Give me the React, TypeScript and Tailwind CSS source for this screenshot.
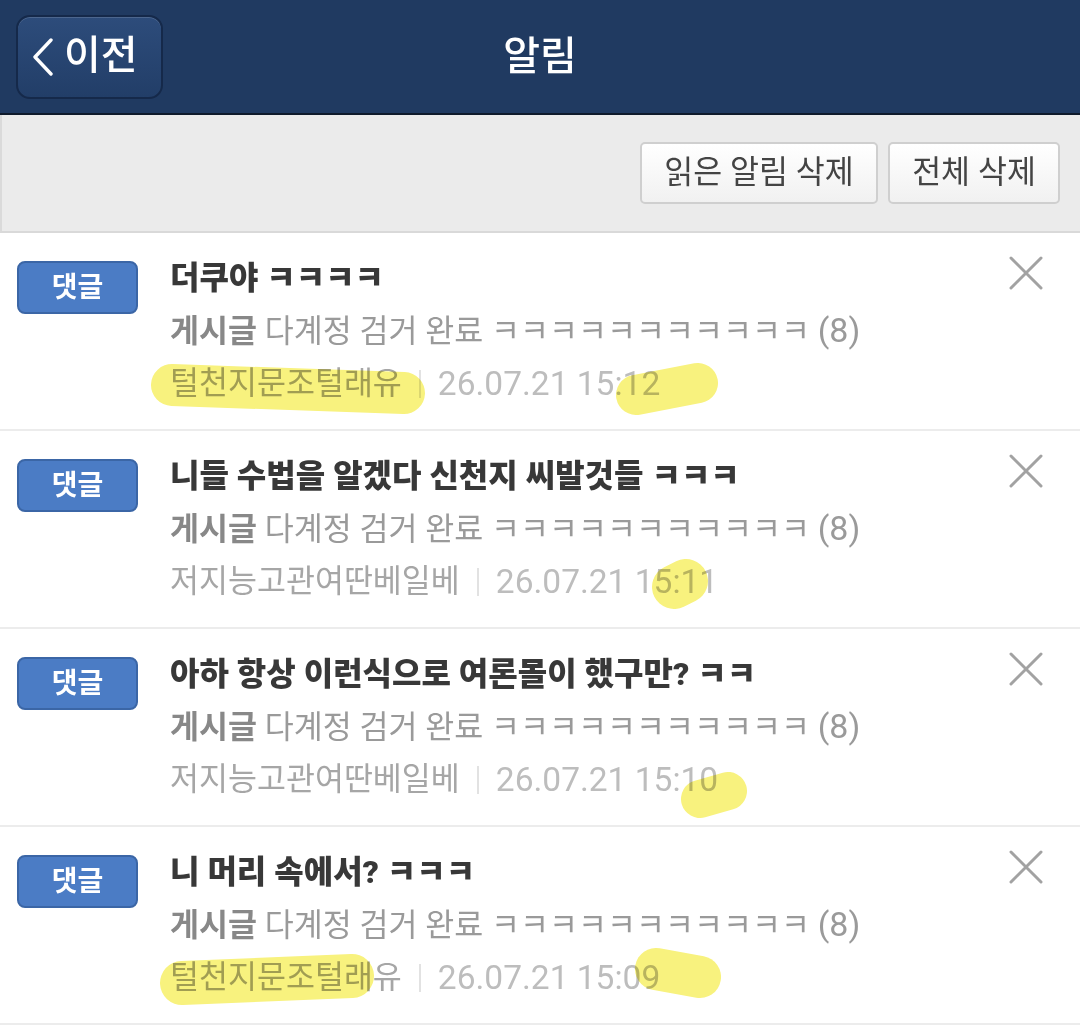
import React from "react"

type Notice = {
  title: string
  author: string
  date: string
  marks: { d: string; w: number }[]
}

const POST = "다계정 검거 완료 ㅋㅋㅋㅋㅋㅋㅋㅋㅋㅋㅋ"

const notices: Notice[] = [
  {
    title: "더쿠야 ㅋㅋㅋㅋ",
    author: "털천지문조털래유",
    date: "26.07.21 15:12",
    marks: [
      { d: "M172 152 L404 160", w: 42 },
      { d: "M636 162 L698 150", w: 40 },
    ],
  },
  {
    title: "니들 수법을 알겠다 신천지 씨발것들 ㅋㅋㅋ",
    author: "저지능고관여딴베일베",
    date: "26.07.21 15:11",
    marks: [{ d: "M674 156 L686 150", w: 44 }],
  },
  {
    title: "아하 항상 이런식으로 여론몰이 했구만? ㅋㅋ",
    author: "저지능고관여딴베일베",
    date: "26.07.21 15:10",
    marks: [{ d: "M700 170 L728 162", w: 38 }],
  },
  {
    title: "니 머리 속에서? ㅋㅋㅋ",
    author: "털천지문조털래유",
    date: "26.07.21 15:09",
    marks: [
      { d: "M182 156 L352 149", w: 44 },
      { d: "M656 142 L700 150", w: 42 },
    ],
  },
]

function CloseIcon() {
  return (
    <svg width="34" height="34" viewBox="0 0 34 34" fill="none">
      <path d="M2 2 L32 32 M32 2 L2 32" stroke="#a2a2a2" strokeWidth="3" strokeLinecap="round" />
    </svg>
  )
}

function NoticeRow({ n }: { n: Notice }) {
  return (
    <li className="relative flex border-b-2 border-[#ececec] h-[198px]">
      <div className="w-[170px] shrink-0 pl-[17px] pt-[28px]">
        <span className="flex items-center justify-center w-[121px] h-[53px] rounded-[8px] bg-[#4b7cc5] border-2 border-[#3b66a6] text-white text-[28px] font-bold">
          댓글
        </span>
      </div>
      <div className="flex-1 pt-[19px] text-[31.5px] leading-[52px]">
        <p className="font-black text-[#383838] text-[32px]">{n.title}</p>
        <p className="text-[#9a9a9a]">
          <span className="font-bold text-[#888]">게시글</span> {POST}{" "}
          <span className="text-[34px]">(8)</span>
        </p>
        <p className="flex items-center">
          <span className="text-[#a6a6a6]">{n.author}</span>
          <span className="mx-[17px] h-[28px] w-[2px] bg-[#e2e2e2]" />
          <span className="text-[#bdbdbd] text-[33.5px]">{n.date}</span>
        </p>
      </div>
      <div className="shrink-0 pt-[23px] pr-[37px]">
        <CloseIcon />
      </div>
      {/* marker scribbles over the row */}
      <svg className="absolute inset-0 pointer-events-none mix-blend-multiply" width="1080" height="198">
        {n.marks.map((m, i) => (
          <path key={i} d={m.d} stroke="#f8f27e" strokeWidth={m.w} strokeLinecap="round" fill="none" />
        ))}
      </svg>
    </li>
  )
}

export default function App() {
  return (
    <div className="w-[1080px] min-h-[1036px] bg-white font-['Roboto','Noto_Sans_CJK_KR',sans-serif]">
      <header className="grid grid-cols-[1fr_auto_1fr] items-center h-[115px] bg-[#203a61] border-b-2 border-[#0f1a2b]">
        <div className="pl-4">
          <button className="flex items-center gap-[10px] w-[147px] h-[84px] pl-[14px] rounded-[14px] border-2 border-[#15294a] bg-gradient-to-b from-[#2d4c7b] to-[#223e68] shadow-[inset_0_1px_0_rgba(255,255,255,0.15)] text-white">
            <svg width="22" height="38" viewBox="0 0 22 38" fill="none">
              <path d="M19 2 L3 19 L19 36" stroke="white" strokeWidth="3.4" strokeLinecap="round" strokeLinejoin="round" />
            </svg>
            <span className="text-[40px] font-medium leading-none -mt-[2px]">이전</span>
          </button>
        </div>
        <h1 className="text-white text-[40px] font-medium">알림</h1>
        <div />
      </header>

      <div className="flex items-center justify-end gap-[10px] h-[118px] pr-5 bg-[#ebebeb] border-l-2 border-[#dadada] border-b-2 border-b-[#d9d9d9]">
        <button className="h-[62px] w-[238px] rounded-[5px] border-2 border-[#cfcfcf] bg-gradient-to-b from-white to-[#f1f1f1] text-[31.5px] text-[#444]">
          읽은 알림 삭제
        </button>
        <button className="h-[62px] w-[172px] rounded-[5px] border-2 border-[#cfcfcf] bg-gradient-to-b from-white to-[#f1f1f1] text-[31.5px] text-[#444]">
          전체 삭제
        </button>
      </div>

      <ul>
        {notices.map((n, i) => (
          <NoticeRow key={i} n={n} />
        ))}
      </ul>
    </div>
  )
}
